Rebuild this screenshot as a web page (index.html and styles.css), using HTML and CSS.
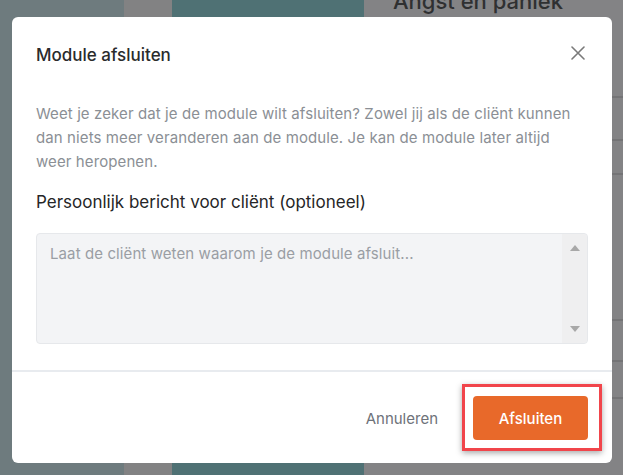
FILE: index.html
```html
<!DOCTYPE html>
<html lang="nl">
<head>
<meta charset="utf-8">
<title>Module afsluiten</title>
<link rel="stylesheet" href="styles.css">
</head>
<body>
<div class="page">
  <div class="sidebar"></div>
  <div class="spacer"></div>
  <div class="card"></div>
  <div class="content">
    <div class="content-title">Angst en paniek</div>
    <div class="rows">
      <div class="row r1"></div>
      <div class="row r2"></div>
      <div class="row r3"></div>
      <div class="row r4"></div>
      <div class="row r5"></div>
      <div class="row r6"></div>
    </div>
  </div>
</div>

<div class="modal">
  <div class="modal-header">
    <h2 class="modal-title">Module afsluiten</h2>
    <button class="close" aria-label="Sluiten">
      <svg width="14" height="14" viewBox="0 0 14 14"><path d="M1 1L13 13M13 1L1 13" stroke="#7a7a7a" stroke-width="1.6" fill="none" stroke-linecap="round"/></svg>
    </button>
  </div>
  <div class="modal-body">
    <p class="intro">Weet je zeker dat je de module wilt afsluiten? Zowel jij als de cliënt kunnen dan niets meer veranderen aan de module. Je kan de module later altijd weer heropenen.</p>
    <div class="label">Persoonlijk bericht voor cliënt (optioneel)</div>
    <div class="textarea">
      <div class="placeholder">Laat de cliënt weten waarom je de module afsluit...</div>
      <div class="scrollbar">
        <span class="arrow up"></span>
        <span class="arrow down"></span>
      </div>
    </div>
  </div>
  <div class="modal-footer">
    <button class="btn-cancel">Annuleren</button>
    <button class="btn-primary">Afsluiten</button>
  </div>
</div>
<div class="highlight"></div>
</body>
</html>
```

FILE: styles.css
```css
* { box-sizing: border-box; }
html, body {
  margin: 0;
  padding: 0;
  width: 623px;
  height: 475px;
  overflow: hidden;
  font-family: Inter, Roboto, "Noto Sans", Arial, sans-serif;
}
.page {
  display: flex;
  width: 623px;
  height: 475px;
}
.sidebar { width: 124px; background: #6e7b7e; }
.spacer { width: 48px; background: #828283; }
.card { width: 192px; background: #4f7174; }
.content {
  flex: 1;
  background: #838385;
  padding-left: 29px;
  overflow: hidden;
}
.content-title {
  font-size: 22px;
  color: #2f3031;
  margin-top: -13px;
  line-height: 28px;
  font-weight: 500;
  white-space: nowrap;
}
.rows { margin-left: -29px; }
.row { border-bottom: 2px solid #747476; }
.r1 { height: 83px; }
.r2 { height: 43px; }
.r3 { height: 34px; }
.r4 { height: 146px; }
.r5 { height: 41px; }
.r6 { height: 37px; }

.modal {
  position: absolute;
  left: 12px;
  top: 17px;
  width: 600px;
  height: 446px;
  background: #fff;
  border-radius: 6px;
  display: flex;
  flex-direction: column;
}
.modal-header {
  display: flex;
  justify-content: space-between;
  align-items: center;
  padding: 26px 24px 0 24px;
}
.modal-title {
  margin: 0;
  font-size: 17px;
  font-weight: 500;
  line-height: 24px;
  color: #2a2b2c;
}
.close {
  border: 0;
  background: none;
  padding: 0;
  width: 14px;
  height: 14px;
  margin-right: 3px;
  margin-top: -5px;
  display: flex;
}
.modal-body {
  padding: 35px 24px 26px 24px;
  border-bottom: 2px solid #e8ebef;
}
.intro {
  margin: 0;
  font-size: 15px;
  line-height: 24px;
  letter-spacing: 0.1px;
  color: #8b8f95;
}
.label {
  margin-top: 16px;
  font-size: 17px;
  line-height: 24px;
  color: #252627;
}
.textarea {
  margin-top: 19px;
  height: 111px;
  background: #f3f4f6;
  border: 1px solid #e6e8eb;
  border-radius: 4px;
  display: flex;
  justify-content: space-between;
}
.placeholder {
  padding: 8px 13px;
  font-size: 15px;
  line-height: 24px;
  letter-spacing: 0.1px;
  color: #9a9ea4;
}
.scrollbar {
  width: 25px;
  background: #efeff0;
  display: flex;
  flex-direction: column;
  justify-content: space-between;
  align-items: center;
  padding: 11px 0 11px 0;
  border-radius: 0 4px 4px 0;
}
.arrow {
  width: 0;
  height: 0;
  border-left: 5px solid transparent;
  border-right: 5px solid transparent;
}
.arrow.up { border-bottom: 6px solid #a8a8a8; }
.arrow.down { border-top: 6px solid #a8a8a8; }

.modal-footer {
  flex: 1;
  display: flex;
  justify-content: flex-end;
  align-items: flex-start;
  padding: 24px 24px 0 24px;
  gap: 35px;
}
.btn-cancel {
  border: 0;
  background: none;
  padding: 0;
  height: 44px;
  font-family: inherit;
  font-size: 15px;
  color: #6e7279;
}
.btn-primary {
  border: 0;
  background: #e8692a;
  color: #fff;
  width: 115px;
  height: 44px;
  border-radius: 4px;
  font-family: inherit;
  font-size: 15px;
  font-weight: 500;
}
.highlight {
  position: absolute;
  left: 462px;
  top: 384px;
  width: 140px;
  height: 67px;
  border: 3px solid #f1454b;
  box-shadow: 0 2px 6px rgba(0,0,0,0.35);
}
```
